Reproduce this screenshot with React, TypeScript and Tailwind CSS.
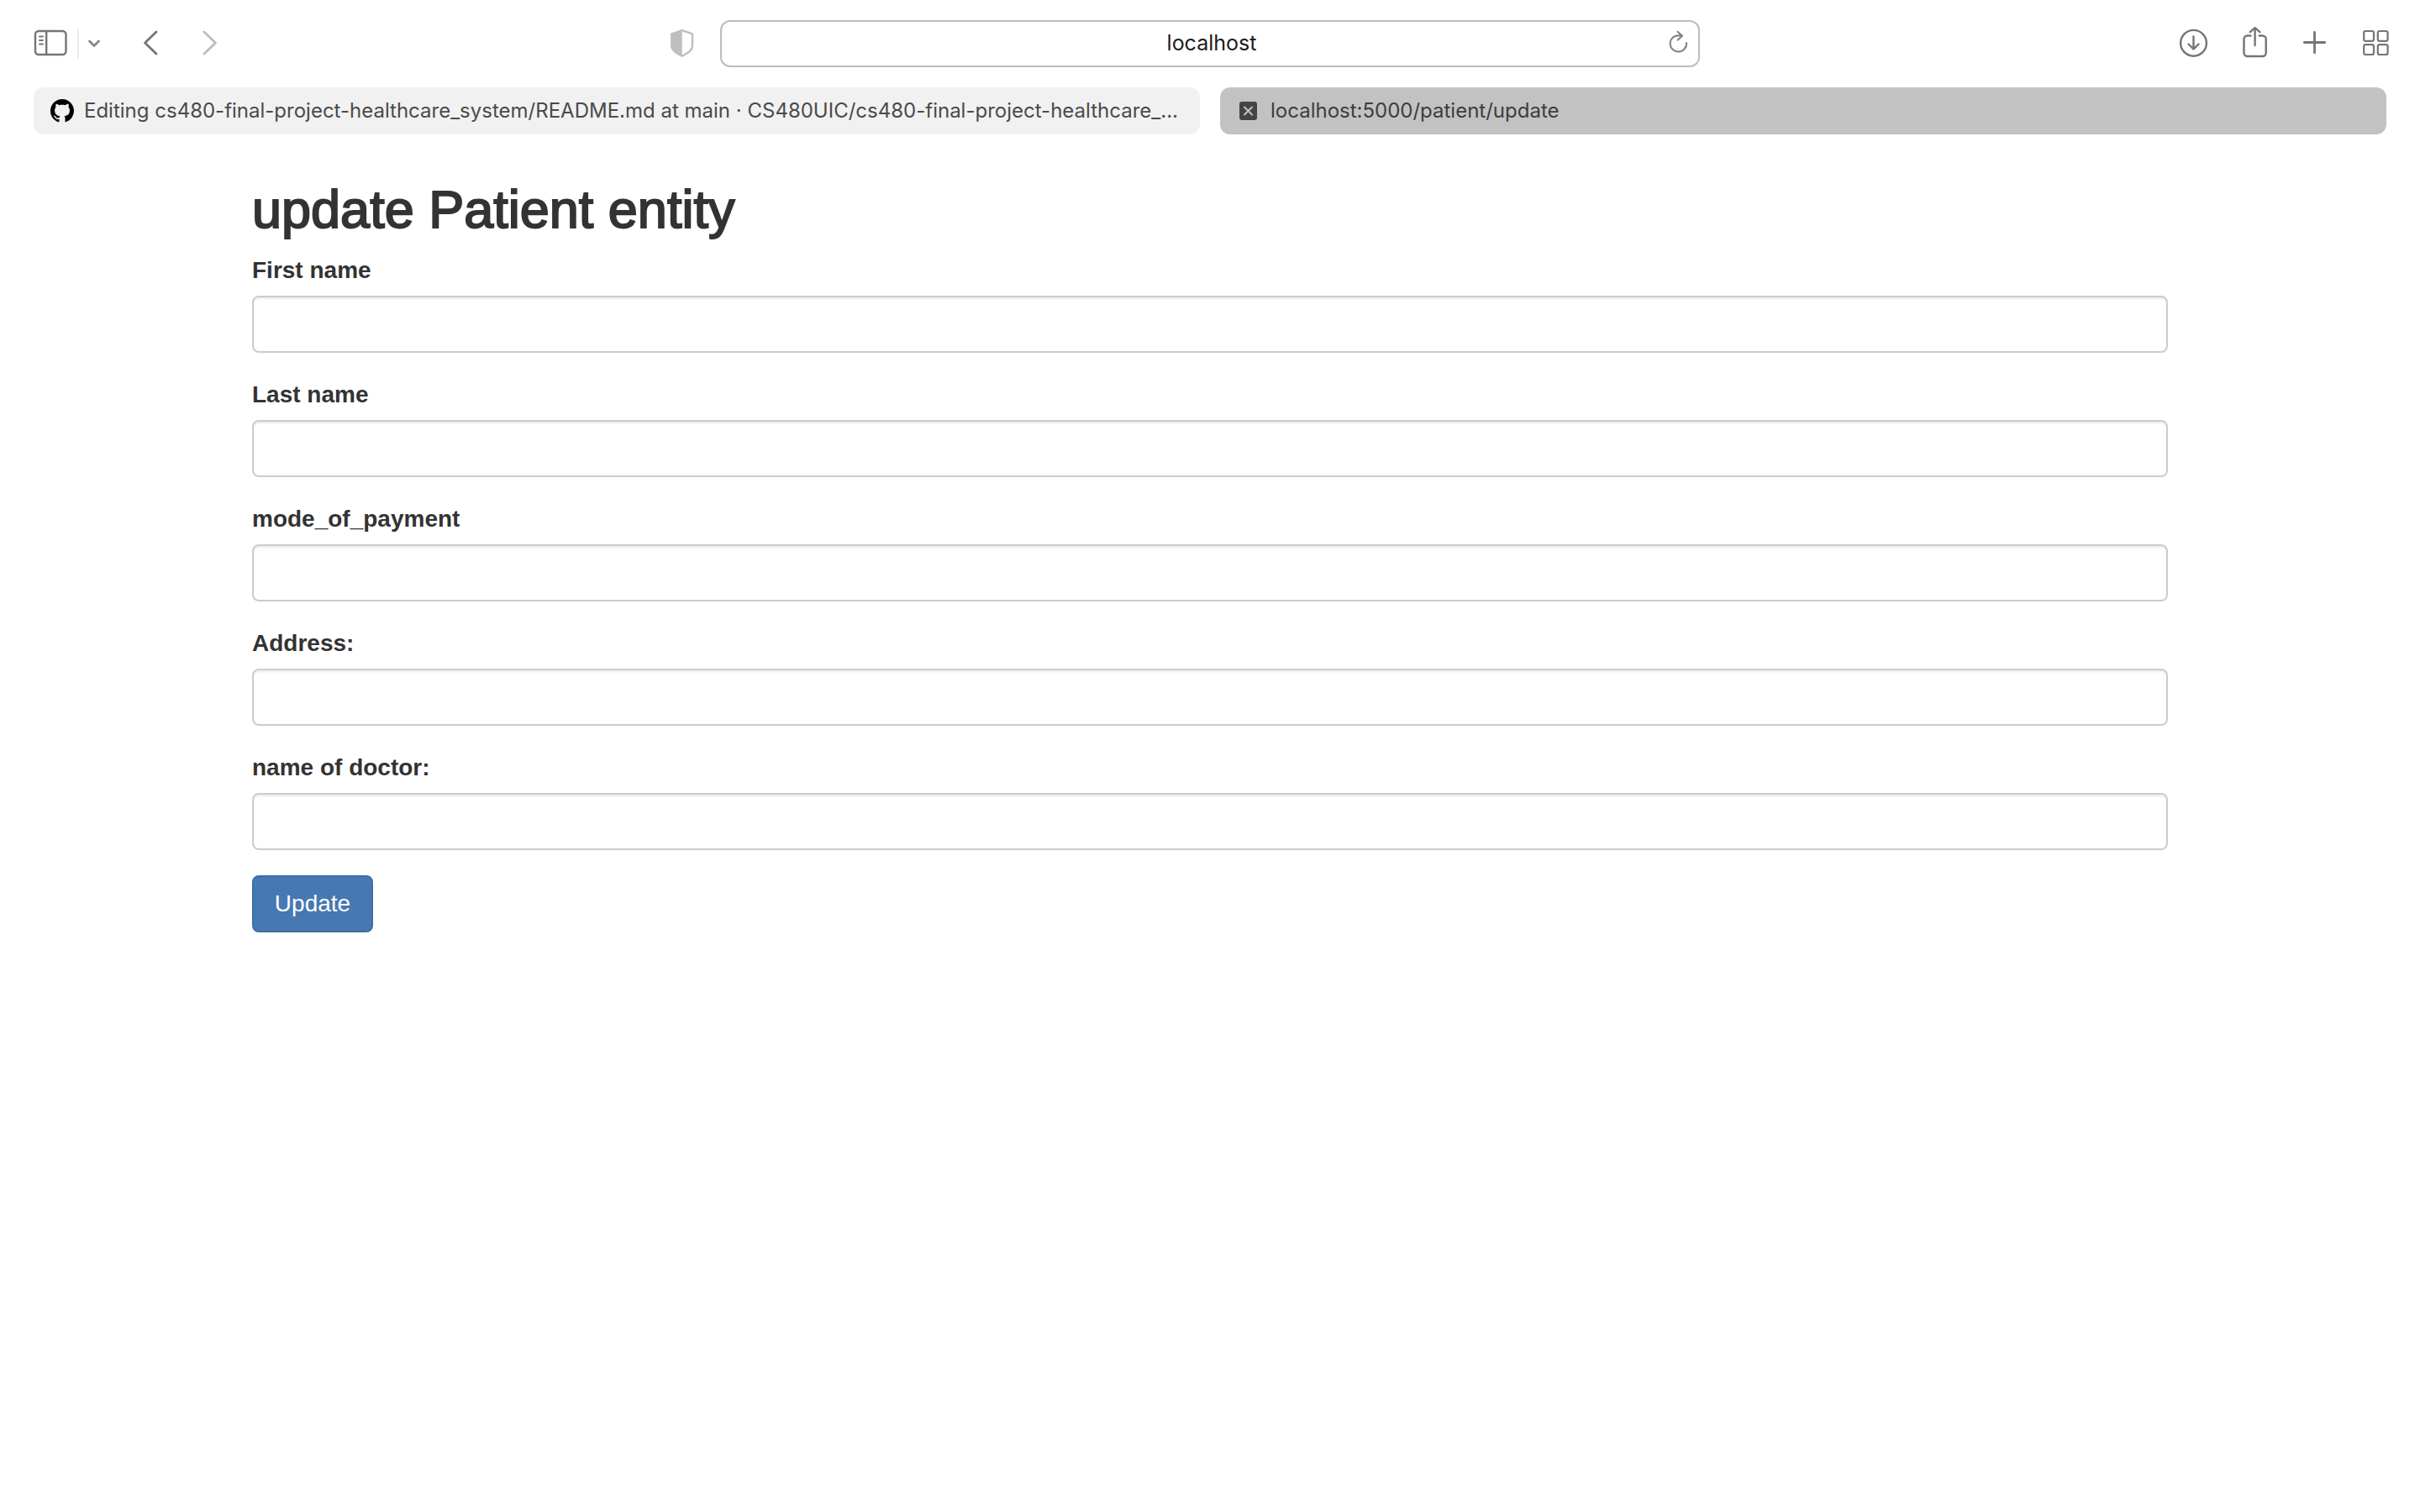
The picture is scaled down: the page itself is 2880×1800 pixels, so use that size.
import { useState } from "react";

const fields = [
  { id: "first_name", label: "First name" },
  { id: "last_name", label: "Last name" },
  { id: "mode_of_payment", label: "mode_of_payment" },
  { id: "address", label: "Address:" },
  { id: "doctor", label: "name of doctor:" },
];

const line = {
  fill: "none",
  stroke: "currentColor",
  strokeLinecap: "round",
  strokeLinejoin: "round",
} as const;

function Toolbar() {
  const [url, setUrl] = useState("localhost");
  return (
    <div className="grid h-[104px] grid-cols-[1fr_40.5%_1fr] items-center text-[#757575]">
      <div className="flex items-center pl-10">
        <button type="button" aria-label="Sidebar">
          <svg width="40" height="40" viewBox="0 0 40 40" {...line} strokeWidth="2.4">
            <rect x="2" y="5" width="36.5" height="28" rx="4" />
            <path d="M15.2 5v28" />
            <path d="M7 11.5h4M7 16h4M7 20.5h4" strokeWidth="1.8" />
          </svg>
        </button>
        <span className="ml-3 h-9 w-[2px] bg-[#ececec]" />
        <button type="button" aria-label="Tab groups" className="ml-2.5 text-[#888888]">
          <svg width="16" height="40" viewBox="0 0 16 40" {...line} strokeWidth="2.8">
            <path d="M2.5 17l5.5 5.5 5.5-5.5" />
          </svg>
        </button>
        <button type="button" aria-label="Back" className="ml-12">
          <svg width="20" height="40" viewBox="0 0 20 40" {...line} strokeWidth="2.8">
            <path d="M18 6L4.5 19L18 32" />
          </svg>
        </button>
        <button type="button" aria-label="Forward" className="ml-[52px] text-[#bdbdbd]">
          <svg width="20" height="40" viewBox="0 0 20 40" {...line} strokeWidth="2.8">
            <path d="M3 6L16.5 19L3 32" />
          </svg>
        </button>
        <button type="button" aria-label="Privacy report" className="mr-[29px] ml-auto text-[#bfbfbf]">
          <svg width="32" height="40" viewBox="0 0 32 40" {...line} strokeWidth="2.4">
            <path d="M15.7 4.2L28 8.3V22.5C28 28.5 21.5 31.5 15.7 34.8C9.9 31.5 3.3 28.5 3.3 22.5V8.3Z" />
            <path
              d="M15.7 4.2V34.8C9.9 31.5 3.3 28.5 3.3 22.5V8.3Z"
              fill="currentColor"
              stroke="none"
            />
          </svg>
        </button>
      </div>

      <div className="relative h-14">
        <input
          type="text"
          aria-label="Address"
          value={url}
          onChange={(e) => setUrl(e.target.value)}
          className="h-full w-full rounded-xl border-2 border-[#bdbdbd] bg-white pr-10 pb-0.5 pl-11 text-center text-[25px] text-[#1c1c1c]"
        />
        <button type="button" aria-label="Reload" className="absolute top-2 right-3 text-[#808080]">
          <svg width="26" height="40" viewBox="0 0 26 40" {...line} strokeWidth="2">
            <path d="M22 19A9.7 9.7 0 1 1 12.3 10.2L16.5 10.6" />
            <path d="M11.5 5.7L17 10.7L11.5 15.7" />
          </svg>
        </button>
      </div>

      <div className="flex items-center justify-end pr-9">
        <button type="button" aria-label="Downloads">
          <svg width="36" height="40" viewBox="0 0 36 40" {...line} strokeWidth="2.4">
            <circle cx="18.5" cy="19.3" r="15.4" />
            <path d="M18.5 11.5V26.5M12.5 20.5L18.5 26.5L24.5 20.5" />
          </svg>
        </button>
        <button type="button" aria-label="Share" className="ml-10">
          <svg width="32" height="40" viewBox="0 0 32 40" {...line} strokeWidth="2.4">
            <path d="M10.5 10.5H6.5A4 4 0 0 0 2.5 14.5V31A4 4 0 0 0 6.5 35H24.7A4 4 0 0 0 28.7 31V14.5A4 4 0 0 0 24.7 10.5H20.7" />
            <path d="M15.6 1.2V22M9.8 6.2L15.6 1.2L21.4 6.2" />
          </svg>
        </button>
        <button type="button" aria-label="New tab" className="ml-10">
          <svg width="30" height="40" viewBox="0 0 30 40" {...line} strokeWidth="2.8">
            <path d="M14.5 6.3V30.7M2.3 18.5H26.7" />
          </svg>
        </button>
        <button type="button" aria-label="Tab overview" className="ml-[42px]">
          <svg width="32" height="40" viewBox="0 0 32 40" {...line} strokeWidth="2.2">
            <rect x="1.2" y="5" width="11.8" height="11.8" rx="2" />
            <rect x="17.8" y="5" width="11.8" height="11.8" rx="2" />
            <rect x="1.2" y="21.2" width="11.8" height="11.8" rx="2" />
            <rect x="17.8" y="21.2" width="11.8" height="11.8" rx="2" />
          </svg>
        </button>
      </div>
    </div>
  );
}

function Tabs() {
  return (
    <nav className="grid grid-cols-2 gap-6 px-10 text-[24px] whitespace-nowrap">
      <a
        href="#readme"
        className="flex h-14 min-w-0 items-center rounded-xl bg-[#f1f1f1] pl-5 text-[#4a4a4a]"
      >
        <svg width="28" height="28" viewBox="0 0 16 16" className="shrink-0 fill-black">
          <path d="M8 0C3.58 0 0 3.58 0 8c0 3.54 2.29 6.53 5.47 7.59.4.07.55-.17.55-.38 0-.19-.01-.82-.01-1.49-2.01.37-2.53-.49-2.69-.94-.09-.23-.48-.94-.82-1.13-.28-.15-.68-.52-.01-.53.63-.01 1.08.58 1.23.82.72 1.21 1.87.87 2.33.66.07-.52.28-.87.51-1.07-1.78-.2-3.64-.89-3.64-3.95 0-.87.31-1.59.82-2.15-.08-.2-.36-1.02.08-2.12 0 0 .67-.21 2.2.82.64-.18 1.32-.27 2-.27s1.36.09 2 .27c1.53-1.04 2.2-.82 2.2-.82.44 1.1.16 1.92.08 2.12.51.56.82 1.27.82 2.15 0 3.07-1.87 3.75-3.65 3.95.29.25.54.73.54 1.48 0 1.07-.01 1.93-.01 2.2 0 .21.15.46.55.38A8.01 8.01 0 0 0 16 8c0-4.42-3.58-8-8-8Z" />
        </svg>
        <span className="ml-3">
          Editing cs480-final-project-healthcare_system/README.md at main · CS480UIC/cs480-final-project-healthcare_...
        </span>
      </a>
      <a
        href="#update"
        aria-current="page"
        className="flex h-14 min-w-0 items-center rounded-xl bg-[#c2c2c2] pl-[23px] text-[#3d3d3d]"
      >
        <svg width="21" height="22" viewBox="0 0 21 22" className="shrink-0">
          <rect width="21" height="22" rx="3" fill="#444444" />
          <path d="M6 6.5l9 9M15 6.5l-9 9" stroke="#c2c2c2" strokeWidth="2" strokeLinecap="round" />
        </svg>
        <span className="ml-4">localhost:5000/patient/update</span>
      </a>
    </nav>
  );
}

export default function App() {
  return (
    <div className="min-h-screen bg-white">
      <header className="font-['Inter',sans-serif]">
        <Toolbar />
        <Tabs />
      </header>
      <main className="mx-auto max-w-[2280px] pt-14 font-['Liberation_Sans',Arial,sans-serif] text-[28px] leading-10 text-[#333333]">
        <h2 className="mb-5 text-[63px] leading-[66px] [-webkit-text-stroke:2px_#333333]">update Patient entity</h2>
        <form onSubmit={(e) => e.preventDefault()}>
          {fields.map((f) => (
            <div key={f.id} className="mb-[30px]">
              <label htmlFor={f.id} className="mb-2.5 block font-bold">
                {f.label}
              </label>
              <input
                id={f.id}
                name={f.id}
                type="text"
                className="block h-[68px] w-full rounded-lg border-2 border-[#cccccc] bg-white px-6 py-3 text-[#555555] shadow-[inset_0_2px_2px_rgba(0,0,0,0.075)]"
              />
            </div>
          ))}
          <button
            type="submit"
            className="block h-[68px] min-w-36 rounded-lg border-2 border-[#3f6da6] bg-[#4678b2] px-6 text-white"
          >
            Update
          </button>
        </form>
      </main>
    </div>
  );
}
